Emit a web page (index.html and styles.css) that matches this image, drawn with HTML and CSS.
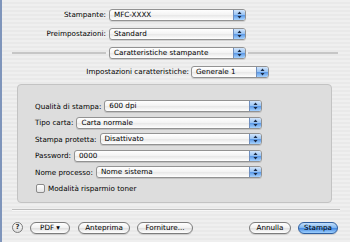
FILE: index.html
```html
<!DOCTYPE html>
<html lang="it">
<head>
    <meta charset="UTF-8">
    <meta name="viewport" content="width=device-width, initial-scale=1.0">
    <title>Stampa</title>
    <link rel="stylesheet" href="styles.css">
</head>
<body>
    <div class="dialog">
        <div class="top-row">
            <span class="top-label">Stampante:</span>
            <div class="popup popup-top"><span class="popup-text">MFC-XXXX</span><span class="popup-arrows"><svg width="5" height="8" viewBox="0 0 5 8"><path d="M2.5 0.5 L4.5 3 L0.5 3 Z M0.5 5 L4.5 5 L2.5 7.5 Z" fill="#1b2a44"/></svg></span></div>
        </div>
        <div class="top-row">
            <span class="top-label">Preimpostazioni:</span>
            <div class="popup popup-top"><span class="popup-text">Standard</span><span class="popup-arrows"><svg width="5" height="8" viewBox="0 0 5 8"><path d="M2.5 0.5 L4.5 3 L0.5 3 Z M0.5 5 L4.5 5 L2.5 7.5 Z" fill="#1b2a44"/></svg></span></div>
        </div>
        <div class="top-row">
            <span class="rule rule-left"></span>
            <div class="popup popup-top"><span class="popup-text">Caratteristiche stampante</span><span class="popup-arrows"><svg width="5" height="8" viewBox="0 0 5 8"><path d="M2.5 0.5 L4.5 3 L0.5 3 Z M0.5 5 L4.5 5 L2.5 7.5 Z" fill="#1b2a44"/></svg></span></div>
            <span class="rule rule-right"></span>
        </div>
        <div class="top-row">
            <span class="feature-label">Impostazioni caratteristiche:</span>
            <div class="popup popup-feature"><span class="popup-text">Generale 1</span><span class="popup-arrows"><svg width="5" height="8" viewBox="0 0 5 8"><path d="M2.5 0.5 L4.5 3 L0.5 3 Z M0.5 5 L4.5 5 L2.5 7.5 Z" fill="#1b2a44"/></svg></span></div>
        </div>

        <div class="group">
            <div class="group-row">
                <span class="group-label">Qualità di stampa:</span>
                <div class="popup popup-fill"><span class="popup-text">600 dpi</span><span class="popup-arrows"><svg width="5" height="8" viewBox="0 0 5 8"><path d="M2.5 0.5 L4.5 3 L0.5 3 Z M0.5 5 L4.5 5 L2.5 7.5 Z" fill="#1b2a44"/></svg></span></div>
            </div>
            <div class="group-row">
                <span class="group-label">Tipo carta:</span>
                <div class="popup popup-fill"><span class="popup-text">Carta normale</span><span class="popup-arrows"><svg width="5" height="8" viewBox="0 0 5 8"><path d="M2.5 0.5 L4.5 3 L0.5 3 Z M0.5 5 L4.5 5 L2.5 7.5 Z" fill="#1b2a44"/></svg></span></div>
            </div>
            <div class="group-row">
                <span class="group-label">Stampa protetta:</span>
                <div class="popup popup-fill"><span class="popup-text">Disattivato</span><span class="popup-arrows"><svg width="5" height="8" viewBox="0 0 5 8"><path d="M2.5 0.5 L4.5 3 L0.5 3 Z M0.5 5 L4.5 5 L2.5 7.5 Z" fill="#1b2a44"/></svg></span></div>
            </div>
            <div class="group-row">
                <span class="group-label">Password:</span>
                <div class="popup popup-fill"><span class="popup-text">0000</span><span class="popup-arrows"><svg width="5" height="8" viewBox="0 0 5 8"><path d="M2.5 0.5 L4.5 3 L0.5 3 Z M0.5 5 L4.5 5 L2.5 7.5 Z" fill="#1b2a44"/></svg></span></div>
            </div>
            <div class="group-row">
                <span class="group-label">Nome processo:</span>
                <div class="popup popup-fill"><span class="popup-text">Nome sistema</span><span class="popup-arrows"><svg width="5" height="8" viewBox="0 0 5 8"><path d="M2.5 0.5 L4.5 3 L0.5 3 Z M0.5 5 L4.5 5 L2.5 7.5 Z" fill="#1b2a44"/></svg></span></div>
            </div>
            <div class="group-row">
                <span class="checkbox"></span>
                <span class="check-label">Modalità risparmio toner</span>
            </div>
        </div>

        <div class="bottom-rule"></div>

        <div class="button-row">
            <span class="help">?</span>
            <span class="btn btn-pdf">PDF ▾</span>
            <span class="btn btn-preview">Anteprima</span>
            <span class="btn btn-supplies">Forniture...</span>
            <span class="spacer"></span>
            <span class="btn btn-cancel">Annulla</span>
            <span class="btn btn-print">Stampa</span>
        </div>
    </div>
</body>
</html>
```

FILE: styles.css
```css
body {
    margin: 0;
    font-family: 'DejaVu Sans', sans-serif;
    font-size: 7.2px;
    color: #000;
}
.dialog {
    width: 350px;
    height: 242px;
    box-sizing: border-box;
    border-left: 2px solid #7f95bb;
    padding-top: 8px;
    background: repeating-linear-gradient(#efefef 0 2px, #e9e9e9 2px 4px);
    overflow: hidden;
}
.top-row {
    display: flex;
    align-items: center;
    height: 13px;
    margin-bottom: 6px;
}
.top-label {
    width: 104px;
    text-align: right;
    margin-right: 3px;
}
.feature-label {
    width: 104px;
    margin-left: 83px;
    margin-right: 2px;
    text-align: right;
}
.rule {
    height: 2px;
    background: #c6c6c6;
}
.rule-left {
    width: 94px;
    margin-left: 10px;
    margin-right: 3px;
}
.rule-right {
    width: 90px;
    margin-left: 2px;
}

/* aqua popup button */
.popup {
    display: flex;
    height: 12px;
    box-sizing: border-box;
    border: 1px solid #929292;
    border-radius: 3px;
    background: linear-gradient(#ffffff 0%, #f4f4f4 45%, #e9e9e9 55%, #ffffff 100%);
    box-shadow: 0 1px 0 rgba(0, 0, 0, 0.12);
    overflow: hidden;
}
.popup-top {
    width: 137px;
}
.popup-feature {
    width: 78px;
}
.popup-fill {
    flex: 1;
}
.popup-text {
    flex: 1;
    padding-left: 4px;
    line-height: 10px;
    white-space: nowrap;
}
.popup-arrows {
    width: 11px;
    display: flex;
    align-items: center;
    justify-content: center;
    border-left: 1px solid #6f8fbf;
    background: linear-gradient(#d2e5fb 0%, #9cc5f3 45%, #5f9be6 55%, #a7d3ff 100%);
}

.group {
    width: 315px;
    height: 119px;
    box-sizing: border-box;
    margin: 4px 0 0 15px;
    padding: 15px 69px 0 17px;
    background: #dddddd;
    border: 1px solid #c3c3c3;
    border-radius: 4px;
}
.group-row {
    display: flex;
    align-items: center;
    height: 12px;
    margin-bottom: 4.6px;
}
.group-label {
    margin-right: 3px;
    white-space: nowrap;
}
.checkbox {
    width: 9px;
    height: 9px;
    box-sizing: border-box;
    margin-left: 1px;
    border: 1px solid #8a8a8a;
    border-radius: 2px;
    background: linear-gradient(#ffffff, #e4e4e4);
}
.check-label {
    margin-left: 3px;
}

.bottom-rule {
    height: 1px;
    margin: 6px 10px 0 10px;
    background: #bdbdbd;
    box-shadow: 0 1px 0 #f8f8f8;
}
.button-row {
    display: flex;
    align-items: center;
    height: 13px;
    margin-top: 11px;
    padding: 0 12px 0 10px;
}
.help {
    width: 11px;
    height: 11px;
    box-sizing: border-box;
    border: 1px solid #7b7b7b;
    border-radius: 50%;
    background: linear-gradient(#ffffff, #dcdcdc);
    font-weight: bold;
    font-size: 7px;
    line-height: 9px;
    text-align: center;
    color: #333;
}
.btn {
    height: 12px;
    box-sizing: border-box;
    border: 1px solid #7c7c7c;
    border-radius: 6px;
    background: linear-gradient(#ffffff 0%, #f2f2f2 45%, #e2e2e2 55%, #ffffff 100%);
    box-shadow: 0 1px 0 rgba(0, 0, 0, 0.12);
    line-height: 10px;
    text-align: center;
    white-space: nowrap;
}
.btn-pdf {
    width: 40px;
    margin-left: 7px;
}
.btn-preview {
    width: 52px;
    margin-left: 8px;
}
.btn-supplies {
    width: 56px;
    margin-left: 7px;
}
.spacer {
    flex: 1;
}
.btn-cancel {
    width: 42px;
}
.btn-print {
    width: 40px;
    margin-left: 7px;
    border-color: #2f5f9f;
    background: linear-gradient(#c5e0fb 0%, #82b8f1 45%, #4b8de2 55%, #9dd0ff 100%);
}
```
